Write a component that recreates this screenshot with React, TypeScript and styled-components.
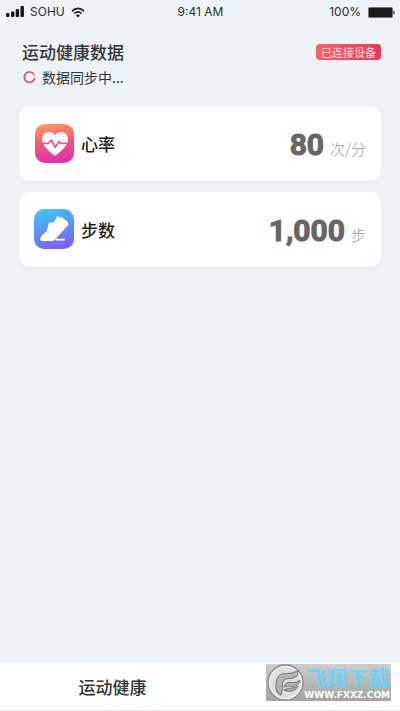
import React from "react";
import styled, { createGlobalStyle } from "styled-components";

const GlobalStyle = createGlobalStyle`
  * { box-sizing: border-box; }
  body {
    margin: 0;
    background: #eef3f7;
    color: #323436;
    font-family: "Noto Sans CJK SC", sans-serif;
  }
`;

const Screen = styled.div`
  min-height: 100vh;
  display: flex;
  flex-direction: column;
`;

const StatusBar = styled.header`
  display: grid;
  grid-template-columns: 1fr auto 1fr;
  align-items: center;
  height: 24px;
  padding: 0 5px 0 6px;
  font: 12px/24px Inter, sans-serif;
  color: #2b2d2f;
`;

const StatusGroup = styled.div<{ $end?: boolean }>`
  display: flex;
  align-items: center;
  justify-content: ${(p) => (p.$end ? "flex-end" : "flex-start")};
  gap: ${(p) => (p.$end ? 7 : 6)}px;
`;

const Main = styled.main`
  flex: 1;
  padding: 16px 19px;
`;

const Heading = styled.div`
  display: flex;
  align-items: center;
  justify-content: space-between;
  padding-left: 3px;
`;

const Title = styled.h1`
  margin: 0;
  font-size: 17px;
  line-height: 24px;
  font-weight: 500;
`;

const Badge = styled.span`
  padding: 0 5px;
  border-radius: 4px;
  background: linear-gradient(90deg, #fb6167, #f03558);
  color: #ffe3e5;
  font-size: 11px;
  line-height: 16px;
`;

const SyncLine = styled.p`
  display: flex;
  align-items: center;
  gap: 6px;
  margin: 2px 0 18px;
  padding-left: 4px;
  font-size: 14px;
  line-height: 22px;
`;

const Cards = styled.ul`
  display: flex;
  flex-direction: column;
  gap: 11px;
  margin: 0;
  padding: 0;
  list-style: none;
`;

const Card = styled.li`
  display: flex;
  align-items: center;
  height: 75px;
  padding: 0 15px;
  border-radius: 11px;
  background: #fff;
  box-shadow: 0 1px 5px rgba(110, 140, 160, 0.1);
`;

const CardName = styled.h2`
  flex: 1;
  margin: 0 0 0 6px;
  color: #1b1c1d;
  font-size: 17px;
  line-height: 24px;
  font-weight: 500;
`;

const Reading = styled.p`
  display: flex;
  align-items: baseline;
  gap: 6px;
  margin: 0;
  padding-top: 7px;
  line-height: 40px;
`;

const Amount = styled.strong`
  color: #666;
  font-family: Roboto, sans-serif;
  font-size: 30px;
  font-weight: 700;
  -webkit-text-stroke: 1px #666;
`;

const Unit = styled.span`
  color: #999;
  font-size: 15px;
  font-weight: 300;
`;

const TabBar = styled.nav`
  display: grid;
  grid-template-columns: 9fr 7fr;
  align-items: start;
  height: 48px;
  background: #fff;
  border-bottom: 1px solid #e6e8ea;
`;

const Tab = styled.button`
  height: 47px;
  padding: 0;
  border: 0;
  background: none;
  color: #323436;
  font: 500 17px/24px "Noto Sans CJK SC", sans-serif;
`;

const SiteMark = styled.a`
  justify-self: end;
  display: flex;
  align-items: center;
  height: 37px;
  margin: 1px 9px 0 0;
  padding: 0 1px;
  background: linear-gradient(#cdcdcd, #a3a3a3);
  text-decoration: none;
`;

const SiteText = styled.span`
  display: flex;
  flex-direction: column;
`;

const SiteName = styled.span`
  padding-left: 1px;
  color: #6cd3f8;
  font-size: 21px;
  line-height: 26px;
  font-weight: 700;
`;

const SiteUrl = styled.span`
  color: #fff;
  font: 700 9px/11px "DejaVu Sans", sans-serif;
`;

const SignalIcon = () => (
  <svg width="18" height="12" viewBox="0 0 18 12" fill="#111" aria-hidden="true">
    <rect x="0" y="7" width="3.4" height="4" rx="1" />
    <rect x="5" y="5.500" width="3.4" height="5.500" rx="1" />
    <rect x="9.700" y="3" width="3.4" height="8" rx="1" />
    <rect x="14.500" y="0" width="3.4" height="11" rx="1" />
  </svg>
);

const WifiIcon = () => (
  <svg width="14" height="11" viewBox="0 0 14 11" fill="none" stroke="#1c1d1e" aria-hidden="true">
    <path d="M1 4.2Q7-1.4 13 4.2" strokeWidth="1.7" />
    <path d="M3.4 6.6Q7 3.2 10.6 6.6" strokeWidth="1.6" />
    <path d="M5 8.4Q7 6.7 9 8.4L7 10.4Z" fill="#1c1d1e" stroke="none" />
  </svg>
);

const BatteryIcon = () => (
  <svg width="27" height="11" viewBox="0 0 27 11" aria-hidden="true">
    <rect x=".5" y=".5" width="24" height="10" rx="1" fill="#1b1b1b" stroke="#77797b" />
    <path d="M25.4 3.5q1.2.2 1.2 2t-1.2 2z" fill="#222" />
  </svg>
);

const SpinnerIcon = () => (
  <svg width="13" height="13" viewBox="0 0 13 13" fill="none" aria-hidden="true">
    <path d="M11.1 3.7A5.2 5.2 0 1 0 11.6 7.3" stroke="#ec4c68" strokeWidth="1.7" />
    <path d="M11.6 7.3A5.2 5.2 0 0 0 11.1 3.7" stroke="#f3b3c0" strokeWidth="1" />
  </svg>
);

const HeartIcon = () => (
  <svg width="41" height="41" viewBox="0 0 41 41" aria-hidden="true">
    <defs>
      <linearGradient id="heart" x1="0" y1="0" x2="0.15" y2="1">
        <stop offset="0" stopColor="#ff9e62" />
        <stop offset=".5" stopColor="#fa5878" />
        <stop offset="1" stopColor="#df34ac" />
      </linearGradient>
    </defs>
    <rect x="1" y="1" width="39" height="39" rx="10" fill="url(#heart)" />
    <path d="M21 33C17 30 8 23 8 16.500C8 12 11 9 14.500 9C17.500 9 20 10.500 21 12.500C22 10.500 24.500 9 27.500 9C31 9 34 12 34 16.500C34 23 25 30 21 33Z" fill="#fff" />
    <path d="M7 20.500H14L17.500 17L21 24.500L25 18.500L27 20.500H35" fill="none" stroke="#f25180" strokeWidth="1.700" strokeLinejoin="round" />
  </svg>
);

const ShoeIcon = () => (
  <svg width="41" height="41" viewBox="0 0 41 41" aria-hidden="true">
    <defs>
      <linearGradient id="shoe" x1="0.2" y1="0" x2="0.5" y2="1">
        <stop offset="0" stopColor="#40c5fb" />
        <stop offset=".55" stopColor="#5b91fb" />
        <stop offset="1" stopColor="#8061f2" />
      </linearGradient>
    </defs>
    <rect x="0" y="0" width="40" height="40" rx="10" fill="url(#shoe)" />
    <path d="M6 30L7.200 27L12.500 22.500L14.700 14.500Q15.500 12.800 17.500 13.500Q20 14 21 11.500L22.500 8Q23.300 6.700 24.500 7.600Q26 9 28 8.600L33.300 12.500L34.500 16Q33 17 32 18.500L20.500 31Q19.800 32 18 32H7.500Q6 32 6 30Z" fill="#fff" />
    <path d="M22.500 30.700H30" stroke="#fff" strokeWidth="1.800" strokeLinecap="round" />
  </svg>
);

const SiteLogo = () => (
  <svg width="37" height="37" viewBox="0 0 37 37" aria-hidden="true">
    <circle cx="18.500" cy="18.500" r="17.500" fill="#f3f3f3" stroke="#85888a" strokeWidth="1.300" />
    <circle cx="18.500" cy="18.500" r="15.500" fill="#dedfdf" />
    <g fill="#b2b4b5" stroke="#7d8082" strokeWidth="1.100" strokeLinejoin="round">
      <path d="M14 31C10 29 8 25 9 19C10 12 14 9 19 9.500C24 10 28 8 31 7C31 12 28 14.500 23 14.500C17 14 15 17 15.500 22C15.800 25 15 28 14 31Z" />
      <path d="M17 23C18 19 21 18 25 18.500C28 19 31 18 33 16.500C32 21 29 22.500 25 22.500C21 22 19 22 17 23Z" />
      <path d="M17 26C20 23.500 26 25 31 22.500C28 27 22 28.500 17 26Z" />
    </g>
  </svg>
);

const metrics = [
  { name: "心率", amount: "80", unit: "次/分", Icon: HeartIcon },
  { name: "步数", amount: "1,000", unit: "步", Icon: ShoeIcon },
];

export default function App() {
  return (
    <Screen>
      <GlobalStyle />
      <StatusBar>
        <StatusGroup>
          <SignalIcon />
          <span>SOHU</span>
          <WifiIcon />
        </StatusGroup>
        <span>9:41 AM</span>
        <StatusGroup $end>
          <span>100%</span>
          <BatteryIcon />
        </StatusGroup>
      </StatusBar>
      <Main>
        <Heading>
          <Title>运动健康数据</Title>
          <Badge>已连接设备</Badge>
        </Heading>
        <SyncLine>
          <SpinnerIcon />
          <span>数据同步中...</span>
        </SyncLine>
        <Cards>
          {metrics.map(({ name, amount, unit, Icon }) => (
            <Card key={name}>
              <Icon />
              <CardName>{name}</CardName>
              <Reading>
                <Amount>{amount}</Amount>
                <Unit>{unit}</Unit>
              </Reading>
            </Card>
          ))}
        </Cards>
      </Main>
      <TabBar>
        <Tab type="button">运动健康</Tab>
        <SiteMark href="#">
          <SiteLogo />
          <SiteText>
            <SiteName>飞翔下载</SiteName>
            <SiteUrl>WWW.FXXZ.COM</SiteUrl>
          </SiteText>
        </SiteMark>
      </TabBar>
    </Screen>
  );
}
